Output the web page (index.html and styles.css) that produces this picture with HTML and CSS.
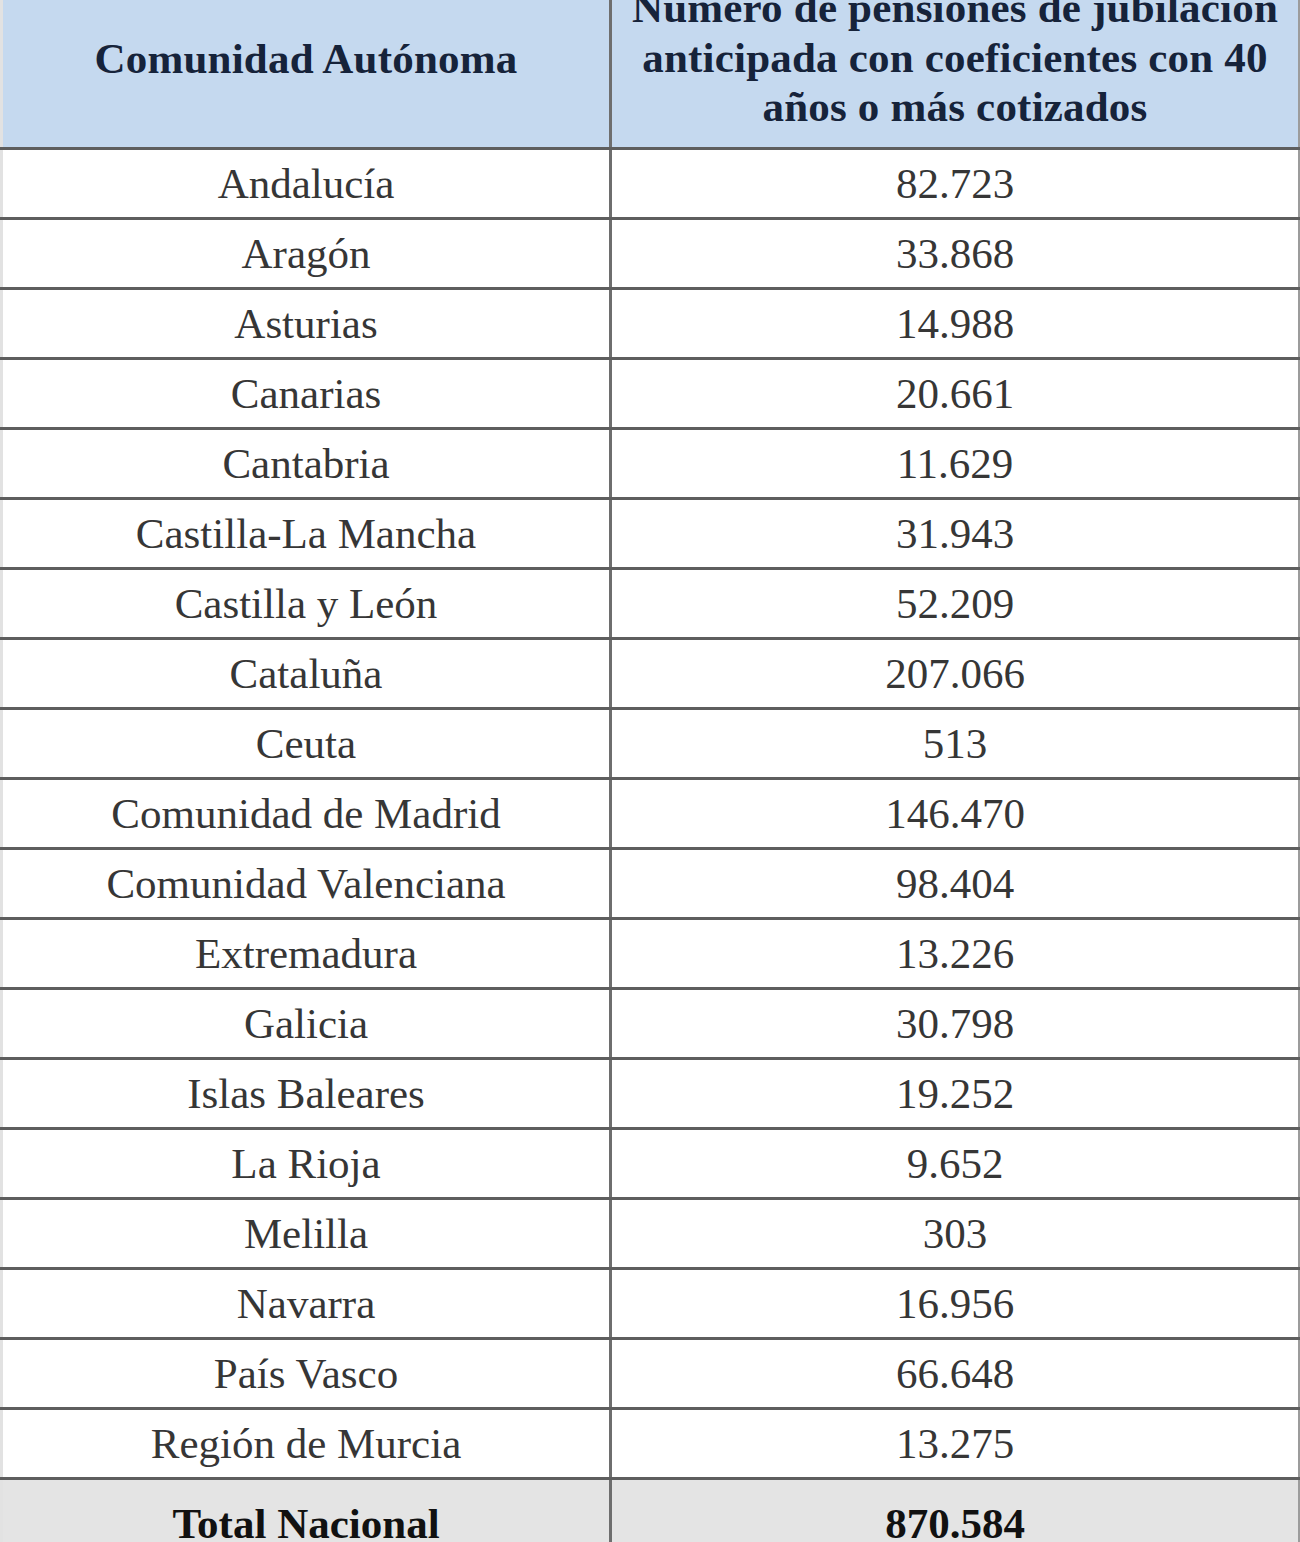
FILE: index.html
```html
<!DOCTYPE html>
<html lang="es">
<head>
<meta charset="utf-8">
<title>Pensiones de jubilación anticipada</title>
<link rel="stylesheet" href="styles.css">
</head>
<body>
<table class="data">
  <colgroup>
    <col class="c1">
    <col class="c2">
  </colgroup>
  <thead>
    <tr>
      <th class="h-left">Comunidad Autónoma</th>
      <th class="h-right">Número de pensiones de jubilación<br>anticipada con coeficientes con 40<br>años o más cotizados</th>
    </tr>
  </thead>
  <tbody>
    <tr><td>Andalucía</td><td>82.723</td></tr>
    <tr><td>Aragón</td><td>33.868</td></tr>
    <tr><td>Asturias</td><td>14.988</td></tr>
    <tr><td>Canarias</td><td>20.661</td></tr>
    <tr><td>Cantabria</td><td>11.629</td></tr>
    <tr><td>Castilla-La Mancha</td><td>31.943</td></tr>
    <tr><td>Castilla y León</td><td>52.209</td></tr>
    <tr><td>Cataluña</td><td>207.066</td></tr>
    <tr><td>Ceuta</td><td>513</td></tr>
    <tr><td>Comunidad de Madrid</td><td>146.470</td></tr>
    <tr><td>Comunidad Valenciana</td><td>98.404</td></tr>
    <tr><td>Extremadura</td><td>13.226</td></tr>
    <tr><td>Galicia</td><td>30.798</td></tr>
    <tr><td>Islas Baleares</td><td>19.252</td></tr>
    <tr><td>La Rioja</td><td>9.652</td></tr>
    <tr><td>Melilla</td><td>303</td></tr>
    <tr><td>Navarra</td><td>16.956</td></tr>
    <tr><td>País Vasco</td><td>66.648</td></tr>
    <tr><td>Región de Murcia</td><td>13.275</td></tr>
    <tr class="total"><td>Total Nacional</td><td>870.584</td></tr>
  </tbody>
</table>
</body>
</html>
```
FILE: styles.css
```css
html, body {
  margin: 0;
  padding: 0;
  background: #ffffff;
}

body {
  overflow: hidden;
}

.data {
  border-collapse: collapse;
  table-layout: fixed;
  width: 1298px;
  margin-top: -27px;
  font-family: "Liberation Serif", "Times New Roman", serif;
}

.c1 { width: 609px; }
.c2 { width: 689px; }

.data th,
.data td {
  border-top: 3px solid #5e5e5e;
  border-bottom: 3px solid #5e5e5e;
  text-align: center;
  vertical-align: middle;
  padding: 0;
  white-space: nowrap;
}

.data th:first-child,
.data td:first-child {
  border-left: 3px solid #e2e2e2;
  border-right: 3px solid #6e6e6e;
}

.data th:last-child,
.data td:last-child {
  border-left: 3px solid #6e6e6e;
  border-right: 3px solid #9c9c9c;
}

.data th {
  background: #c5d9ef;
  color: #16233a;
  font-weight: bold;
  font-size: 43px;
  line-height: 49.5px;
  letter-spacing: 0.2px;
  height: 163px;
}

.data .h-left {
  padding-bottom: 5px;
}

.data .h-right {
  padding-bottom: 8px;
}

.data td {
  color: #363636;
  font-size: 43px;
  line-height: 1;
  height: 67px;
}

.data .total td {
  background: #e4e4e4;
  color: #111111;
  font-weight: bold;
  height: 87px;
}
```
